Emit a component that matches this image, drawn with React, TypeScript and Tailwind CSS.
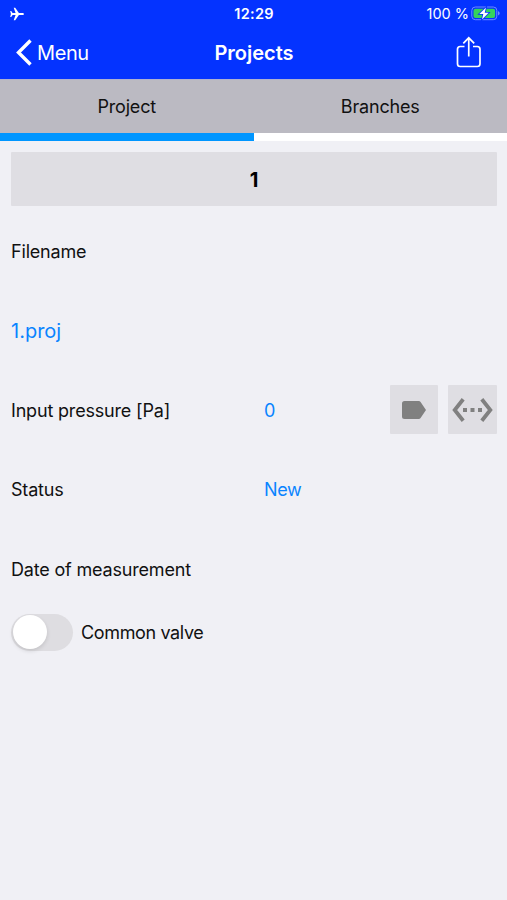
import React from "react";

function StatusBar() {
  return (
    <div className="grid h-[27px] grid-cols-[1fr_100px_1fr] items-center pl-[10px] pr-[7px]">
      <svg width="14" height="14" viewBox="0 0 14 14" fill="#fff" aria-label="Airplane mode">
        <path d="M14 7c0-.7-.8-1.1-1.700-1.100H8.900L5.200.8H3.700L5.600 5.900H2.600L1.200 4H.2L.9 7 .2 10h1l1.400-1.900h3L3.700 13.200h1.500l3.700-5.100h3.400c.9 0 1.700-.4 1.700-1.100z" />
      </svg>
      <span className="pr-[2px] pt-[2px] text-center text-[14.500px] font-semibold leading-none tracking-[0.020em]">12:29</span>
      <div className="flex items-center justify-end gap-[2px]">
        <span className="whitespace-nowrap pt-[2px] text-[14.500px] leading-none tracking-[0em]">100 %</span>
        <svg width="29" height="15" viewBox="0 0 29 15">
          <rect x=".8" y="1" width="25" height="12.700" rx="3.500" fill="none" stroke="#6f8bff" strokeWidth="1" />
          <rect x="2.500" y="2.700" width="21.600" height="9.300" rx="2" fill="#35d35c" />
          <path d="M27 5.200v4.300c1.100-.3 1.700-1.200 1.700-2.150s-.6-1.850-1.700-2.150z" fill="#6f8bff" />
          <path d="M15 1.500L8.300 8h4l-1.300 5.500L17.700 6.800h-4z" fill="#fff" stroke="#0433ff" strokeWidth="1.600" paintOrder="stroke" />
        </svg>
      </div>
    </div>
  );
}

function NavBar() {
  return (
    <div className="grid h-[52px] grid-cols-3 items-center pl-4 pr-[25px]">
      <button className="flex items-center gap-[5px] text-left">
        <svg width="16" height="27" viewBox="0 0 16 27" fill="none" stroke="#fff" strokeWidth="3.400" className="-mt-[1px]">
          <path d="M14.500 1.500L2.500 13.500l12 12" />
        </svg>
        <span className="text-[20px] leading-none tracking-[-0.020em]">Menu</span>
      </button>
      <h1 className="pl-[10px] text-center text-[20px] font-semibold leading-none tracking-[0em]">Projects</h1>
      <button className="-mt-[2px] flex justify-end" aria-label="Share">
        <svg width="27" height="32" viewBox="0 0 27 32" fill="none" stroke="#fff" strokeWidth="1.700">
          <path d="M9.500 10.500H5.200a2.700 2.700 0 0 0-2.700 2.700v14.600a2.700 2.700 0 0 0 2.700 2.700h17.100a2.700 2.700 0 0 0 2.700-2.700V13.200a2.700 2.700 0 0 0-2.700-2.700H18M13.750 20.500V2M8.300 7.300l5.450-5.500 5.450 5.500" />
        </svg>
      </button>
    </div>
  );
}

function Row({ label, value, children }: { label: string; value?: string; children?: React.ReactNode }) {
  return (
    <div className="grid h-[79.500px] grid-cols-[253px_1fr_auto] items-center">
      <span className="pt-[2px] tracking-[-0.010em]">{label}</span>
      <span className="pt-[2px] text-[#0a84ff]">{value}</span>
      {children}
    </div>
  );
}

export default function App() {
  return (
    <div className="flex h-[900px] w-[507px] flex-col overflow-hidden bg-[#f0f0f5] font-['Inter','Liberation_Sans',sans-serif] text-[18px] leading-none tracking-[-0.020em] text-[#111]">
      <header className="bg-[#0433ff] text-white">
        <StatusBar />
        <NavBar />
      </header>
      <nav className="grid h-[53.500px] grid-cols-2 border-t border-[#afb1d0] bg-[#bbbac2] text-center">
        <button className="pt-[2px] text-[18px] tracking-[-0.010em]">Project</button>
        <button className="pt-[2px] text-[18px] tracking-[-0.010em]">Branches</button>
      </nav>
      <div className="h-[8.500px] bg-white">
        <div className="h-full w-[254px] bg-[#0096ff]" />
      </div>
      <main className="flex flex-col pl-[11px] pr-[10px] pt-[11px]">
        <button className="h-[54px] rounded-[1px] bg-[#dfdee3] pt-[2px] text-[20px] font-bold text-black">1</button>
        <div className="pt-[5px]">
          <Row label="Filename" />
          <div className="flex h-[79.500px] items-center pt-[2px] text-[20px] tracking-[0em] text-[#0a84ff]">1.proj</div>
          <Row label="Input pressure [Pa]" value="0">
            <div className="flex gap-[10px]">
              <button className="flex h-[49px] w-[48px] items-center justify-center rounded-[1px] bg-[#dfdee3]" aria-label="Label">
                <svg width="24" height="18" viewBox="0 0 24 18" fill="#808080">
                  <path d="M2.500 0h14.200c.8 0 1.500.4 1.900 1L24 9l-5.400 8c-.4.600-1.100 1-1.900 1H2.500A2.500 2.500 0 0 1 0 15.500v-13A2.500 2.500 0 0 1 2.500 0z" />
                </svg>
              </button>
              <button className="flex size-[49px] items-center justify-center rounded-[1px] bg-[#dfdee3]" aria-label="Range">
                <svg width="41" height="24" viewBox="0 0 41 24" fill="none" stroke="#808080" strokeWidth="3.800">
                  <path d="M11.200 1.300L2.700 12l8.500 10.700M29.800 1.300L38.300 12l-8.500 10.700" />
                  <path d="M11 12h4M18.500 12h4M26 12h4" />
                </svg>
              </button>
            </div>
          </Row>
          <Row label="Status" value="New" />
          <Row label="Date of measurement" />
        </div>
        <div className="mt-[5px] flex items-center gap-[8px]">
          <button role="switch" aria-checked="false" className="flex h-[37px] w-[62px] items-center rounded-full bg-[#dedde1] pl-[2px]">
            <span className="size-[34px] rounded-full bg-white shadow-[0_2px_4px_rgba(0,0,0,0.120)]" />
          </button>
          <span className="pt-[2px]">Common valve</span>
        </div>
      </main>
    </div>
  );
}
